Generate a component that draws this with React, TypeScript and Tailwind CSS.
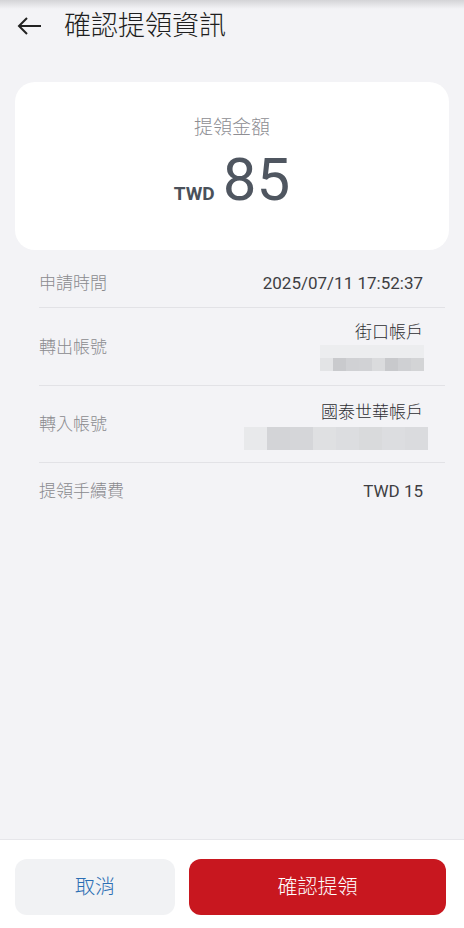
import React from "react";

const rows1 = ["#e3e4e6", "#c9cacd", "#d0d1d4", "#d1d2d5", "#dadbdd", "#c8c9cc", "#cfd0d3", "#d3d4d6"];
const rows2 = ["#e8e9eb", "#d3d4d7", "#d5d6d9", "#dfe0e2", "#dcdde0", "#d9dadc", "#dcdde0", "#dadbde"];

const Blur1: React.FC = () => (
  <div className="flex flex-col w-[104px] mr-[-1px]">
    <div className="h-[13px] bg-[#ecedef]" />
    <div className="flex h-[13px]">
      {rows1.map((c, i) => (
        <div key={i} className="flex-1" style={{ backgroundColor: c }} />
      ))}
    </div>
  </div>
);

const Blur2: React.FC = () => (
  <div className="flex w-[184px] h-[23px] mr-[-5px]">
    {rows2.map((c, i) => (
      <div key={i} className="flex-1" style={{ backgroundColor: c }} />
    ))}
  </div>
);

const App: React.FC = () => {
  return (
    <div className="h-[928px] w-[464px] flex flex-col bg-[#f3f3f6] font-['Roboto','Noto_Sans_CJK_TC',sans-serif] font-light overflow-hidden">
      <div className="h-[52px] flex items-center pl-[17px] bg-[linear-gradient(to_bottom,#d4d4d7_0px,#f3f3f6_9px)]">
        <svg width="25" height="20" viewBox="0 0 25 20" fill="none" stroke="#222" strokeWidth="2">
          <path d="M24 10H2M10 2L2 10l8 8" />
        </svg>
        <h1 className="ml-[22px] text-[27px] text-[#1e1e20]">確認提領資訊</h1>
      </div>

      <div className="flex-1 px-[15px] pt-[30px]">
        <div className="bg-white rounded-[20px] h-[168px] flex flex-col items-center pt-[32px]">
          <div className="text-[19px] text-[#8e8e93]">提領金額</div>
          <div className="flex items-baseline mt-[4px]">
            <span className="text-[19px] font-bold text-[#4a515a] mr-[8px]">TWD</span>
            <span className="text-[60px] leading-[66px] text-[#4f5660] font-normal">85</span>
          </div>
        </div>

        <div className="px-[24px] mt-[8px]">
          <div className="flex justify-between items-center h-[50px] border-b border-[#e2e2e6] mr-[-20px] pr-[22px] pt-[2px]">
            <span className="text-[17px] text-[#8a8a8e]">申請時間</span>
            <span className="text-[17px] text-[#3e3e42] font-normal">2025/07/11 17:52:37</span>
          </div>
          <div className="flex justify-between items-center h-[78px] border-b border-[#e2e2e6] mr-[-20px] pr-[22px]">
            <span className="text-[17px] text-[#8a8a8e] pt-[2px]">轉出帳號</span>
            <div className="flex flex-col items-end pb-[4px]">
              <span className="text-[17px] text-[#2e2e32] leading-[26px]">街口帳戶</span>
              <Blur1 />
            </div>
          </div>
          <div className="flex justify-between items-center h-[77px] border-b border-[#e2e2e6] mr-[-20px] pr-[22px]">
            <span className="text-[17px] text-[#8a8a8e] pt-[2px]">轉入帳號</span>
            <div className="flex flex-col items-end pb-[2px]">
              <span className="text-[17px] text-[#2e2e32] leading-[30px]">國泰世華帳戶</span>
              <Blur2 />
            </div>
          </div>
          <div className="flex justify-between items-center h-[56px] pt-[1px]">
            <span className="text-[17px] text-[#8a8a8e]">提領手續費</span>
            <span className="text-[17px] text-[#3e3e42] font-normal mr-[2px]">TWD 15</span>
          </div>
        </div>
      </div>

      <div className="h-[89px] bg-white border-t border-[#e6e6ea] flex gap-[14px] pl-[15px] pr-[18px] pt-[19px]">
        <button className="w-[160px] h-[56px] rounded-[12px] bg-[#f1f2f4] text-[20px] text-[#2b6eb3]">取消</button>
        <button className="flex-1 h-[56px] rounded-[12px] bg-[#c8171f] text-[20px] text-white">確認提領</button>
      </div>
    </div>
  );
};

export default App;
